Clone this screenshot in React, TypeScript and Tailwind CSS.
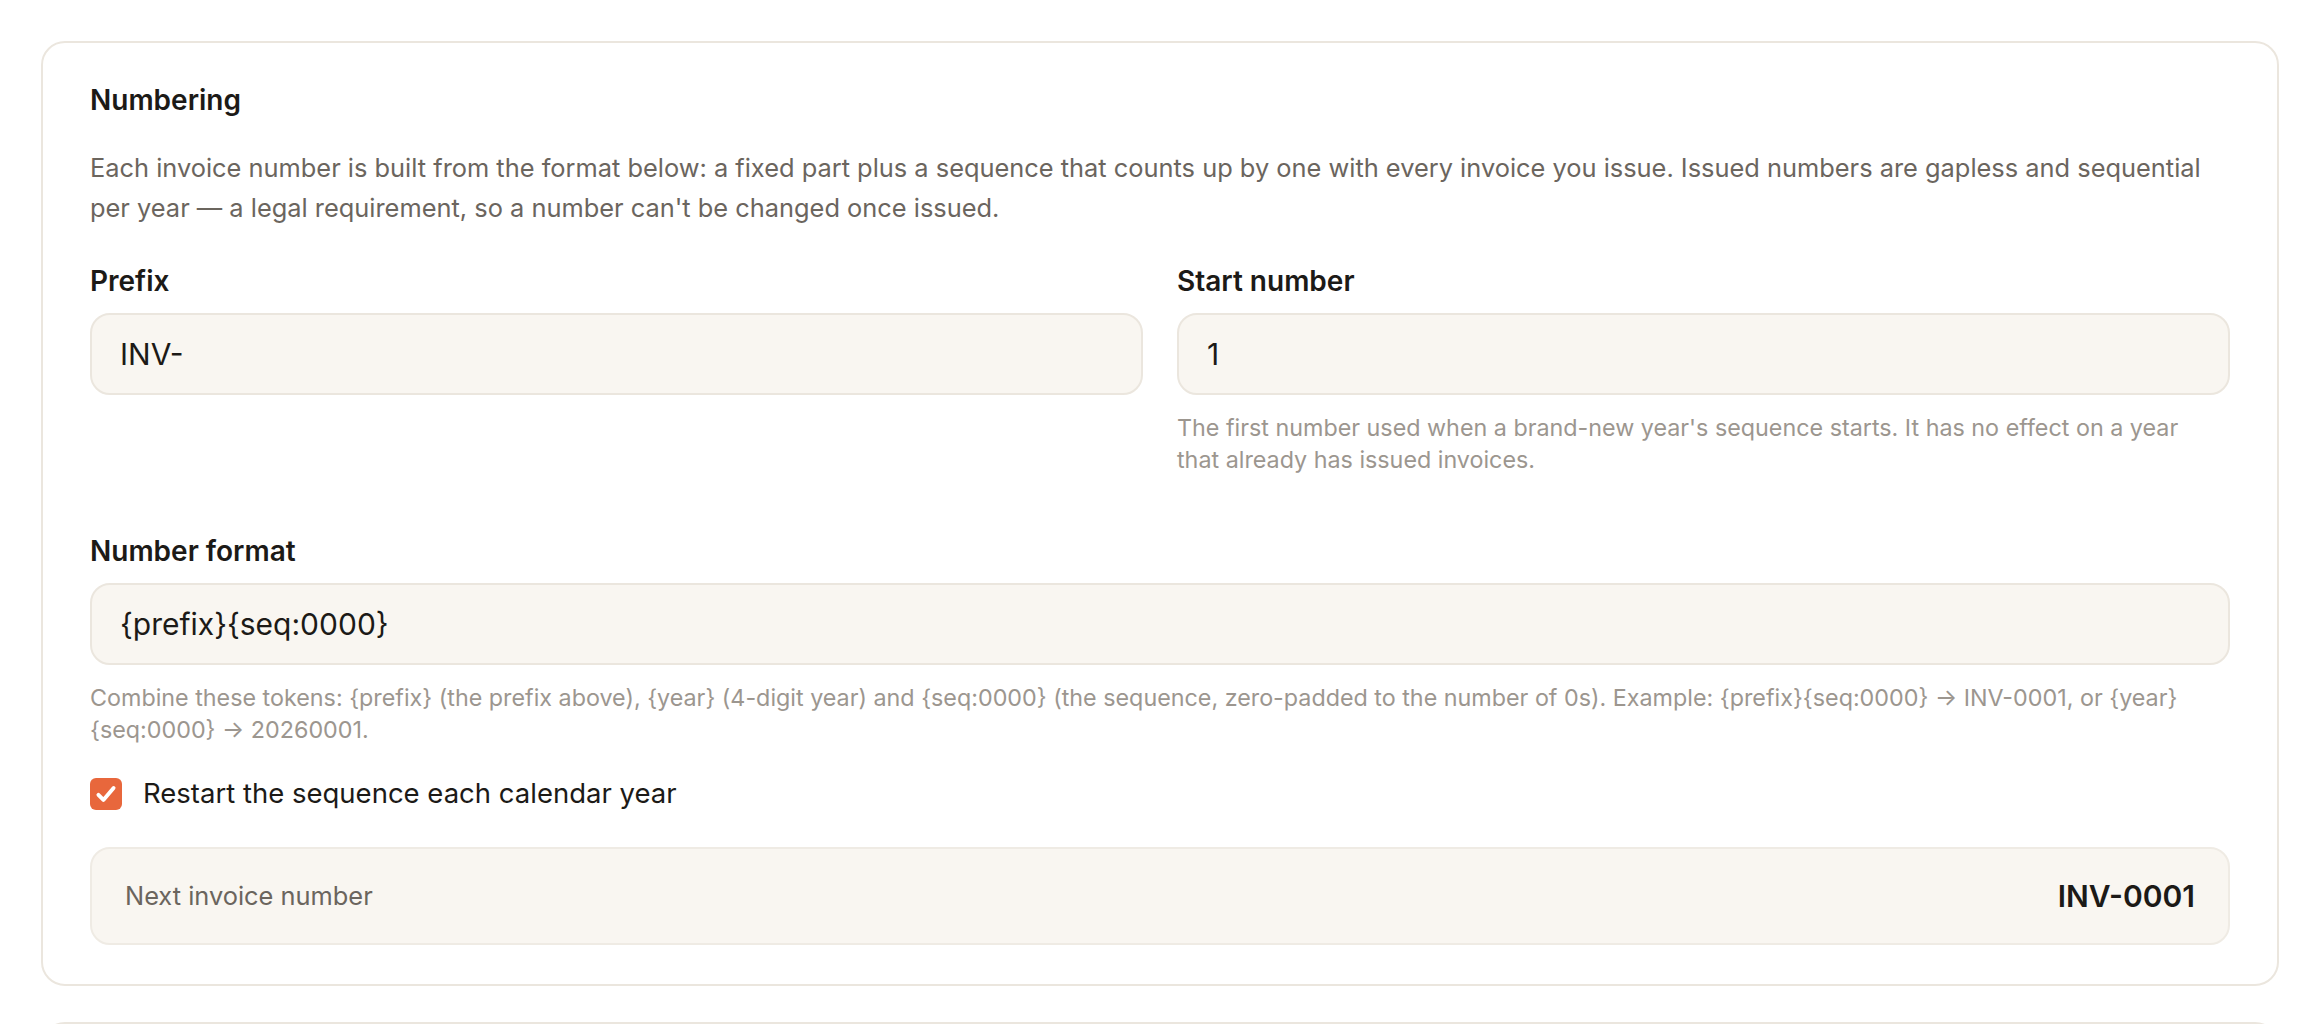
import React from "react";

const FONT = "font-['Inter','Noto_Sans',sans-serif]";

const Field = ({
  label,
  value,
  help,
}: {
  label: string;
  value: string;
  help?: string;
}) => {
  return (
    <div className="flex flex-col">
      <label className="text-[28px] leading-[40px] font-semibold text-[#1c1a17]">
        {label}
      </label>
      <div className="mt-[12px] h-[82px] rounded-[20px] border-2 border-[#ebe6de] bg-[#f9f6f1] px-[28px] flex items-center text-[30px] text-[#1c1a17]">
        {value}
      </div>
      {help && (
        <p className="mt-[17px] pr-[16px] text-[23.3px] leading-[32px] text-[#9c968f]">
          {help}
        </p>
      )}
    </div>
  );
};

export default function App() {
  return (
    <div className={`min-h-screen bg-white pt-[41px] px-[41px] ${FONT}`}>
      {/* Numbering card */}
      <section className="rounded-[24px] border-2 border-[#ebe6de] px-[47px] pt-[39px] pb-[39px]">
        <h2 className="text-[28px] leading-[36px] font-semibold text-[#1c1a17]">
          Numbering
        </h2>
        <p className="mt-[30px] text-[25.4px] leading-[40px] text-[#6b655e]">
          Each invoice number is built from the format below: a fixed part plus
          a sequence that counts up by one with every invoice you issue. Issued
          numbers are gapless and sequential per year — a legal requirement, so
          a number can't be changed once issued.
        </p>

        <div className="mt-[33px] grid grid-cols-2 gap-x-[34px]">
          <Field label="Prefix" value="INV-" />
          <Field
            label="Start number"
            value="1"
            help="The first number used when a brand-new year's sequence starts. It has no effect on a year that already has issued invoices."
          />
        </div>

        <div className="mt-[55px]">
          <Field
            label="Number format"
            value="{prefix}{seq:0000}"
            help="Combine these tokens: {prefix} (the prefix above), {year} (4-digit year) and {seq:0000} (the sequence, zero-padded to the number of 0s). Example: {prefix}{seq:0000} → INV-0001, or {year}{seq:0000} → 20260001."
          />
        </div>

        {/* Restart checkbox */}
        <label className="mt-[28px] flex items-center gap-[21px] h-[40px]">
          <span className="w-[32px] h-[32px] rounded-[6px] bg-[#e8673c] flex items-center justify-center shrink-0">
            <svg width="26" height="26" viewBox="0 0 24 24" fill="none">
              <path
                d="M5 12.8l4.6 4.7L19 6.5"
                stroke="white"
                strokeWidth="3.6"
                strokeLinecap="round"
                strokeLinejoin="round"
              />
            </svg>
          </span>
          <span className="text-[27.5px] text-[#1c1a17]">
            Restart the sequence each calendar year
          </span>
        </label>

        {/* Preview */}
        <div className="mt-[33px] h-[98px] rounded-[20px] border-2 border-[#efebe4] bg-[#f9f6f1] px-[33px] flex items-center justify-between">
          <span className="text-[25.4px] text-[#6b655e]">Next invoice number</span>
          <span className="text-[30px] font-semibold text-[#1c1a17]">
            INV-0001
          </span>
        </div>
      </section>

      {/* Next card (cut off) */}
      <section className="mt-[36px] h-[120px] rounded-[24px] border-2 border-[#ebe6de]" />
    </div>
  );
}
